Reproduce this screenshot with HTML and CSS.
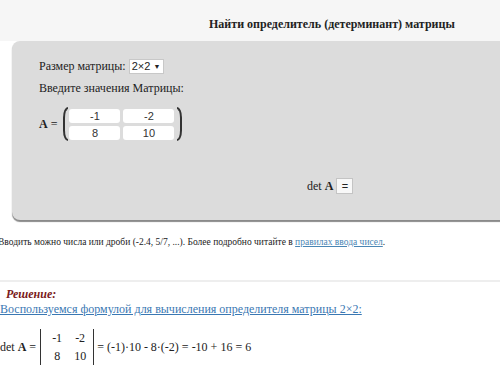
FILE: index.html
```html
<!DOCTYPE html>
<html lang="ru">
<head>
    <meta charset="UTF-8">
    <title>Определитель матрицы</title>
    <link rel="stylesheet" href="styles.css">
</head>
<body>

<div class="top">
    <h1 class="title">Найти определитель (детерминант) матрицы</h1>
</div>

<div class="panel">
    <div class="row">
        Размер матрицы:
        <span class="select">2×2 <span class="caret">▼</span></span>
    </div>
    <div class="row">Введите значения Матрицы:</div>
    <div class="matrix-row">
        <span><b>A</b> =</span>
        <span class="paren left"></span>
        <div class="cells">
            <span class="cell">-1</span>
            <span class="cell">-2</span>
            <span class="cell">8</span>
            <span class="cell">10</span>
        </div>
        <span class="paren right"></span>
    </div>
    <div class="det-row">
        <span>det <b>A</b></span>
        <span class="eq-button">=</span>
    </div>
</div>

<p class="note">Вводить можно числа или дроби (-2.4, 5/7, ...). Более подробно читайте в <a href="#">правилах ввода чисел</a>.</p>

<div class="solution">
    <div class="sol-title">Решение:</div>
    <a class="formula-link" href="#">Воспользуемся формулой для вычисления определителя матрицы 2×2:</a>
    <div class="det-line">
        <span>det <b>A</b> =</span>
        <div class="det-matrix">
            <span>-1</span><span>-2</span>
            <span>8</span><span>10</span>
        </div>
        <span>= (-1)·10 - 8·(-2) = -10 + 16 = 6</span>
    </div>
</div>

</body>
</html>
```

FILE: styles.css
```css
body {
    margin: 0;
    background-color: #fff;
    font-family: "Liberation Serif", "Times New Roman", serif;
    font-size: 12px;
    color: #222;
    overflow: hidden;
}

.top {
    background-color: #f6f6f6;
    height: 41px;
}

.title {
    margin: 0;
    padding: 17px 0 0 209px;
    font-size: 12px;
    font-weight: bold;
    color: #222;
}

.panel {
    background-color: #dcdcdc;
    margin: 0 -20px 0 12px;
    height: 179px;
    border-radius: 8px 0 0 8px;
    padding: 18px 0 0 27px;
    box-sizing: border-box;
    box-shadow: 0 2px 1px #8a8a8a;
}

.row {
    height: 22px;
    line-height: 15px;
}

.select {
    display: inline-block;
    background: #fff;
    border: 1px solid #c8c8c8;
    font-family: "Liberation Sans", Arial, sans-serif;
    font-size: 11px;
    line-height: 13px;
    padding: 0 3px 0 2px;
}

.caret {
    font-size: 7px;
    vertical-align: 1px;
}

.matrix-row {
    display: flex;
    align-items: center;
    margin-top: 4px;
}

.paren {
    width: 5px;
    height: 34px;
    border: 2px solid #333;
    box-sizing: border-box;
}

.paren.left {
    margin-left: 6px;
    border-right: none;
    border-radius: 8px 0 0 8px / 17px 0 0 17px;
    margin-right: 1px;
}

.paren.right {
    border-left: none;
    border-radius: 0 8px 8px 0 / 0 17px 17px 0;
    margin-left: 3px;
}

.cells {
    display: grid;
    grid-template-columns: 51px 51px;
    gap: 3px 3px;
}

.cell {
    background: #fff;
    border-radius: 3px;
    height: 14px;
    line-height: 14px;
    text-align: center;
    font-family: "Liberation Sans", Arial, sans-serif;
    font-size: 11px;
    color: #333;
}

.det-row {
    margin: 37px 0 0 268px;
    display: flex;
    align-items: center;
    gap: 3px;
}

.eq-button {
    display: inline-block;
    background: #f8f8f8;
    border: 1px solid #c4c4c4;
    width: 15px;
    height: 14px;
    line-height: 14px;
    text-align: center;
    font-family: "Liberation Sans", Arial, sans-serif;
    font-size: 11px;
}

.note {
    margin: 17px 0 0 -2px;
    font-size: 9.5px;
    color: #222;
    white-space: nowrap;
}

.note a {
    color: #4a86b4;
}

.solution {
    margin-top: 33px;
    border-top: 2px solid #eeeeee;
    padding-top: 4px;
}

.sol-title {
    color: #7a1a1a;
    font-weight: bold;
    font-style: italic;
    margin-left: 6px;
    line-height: 16px;
}

.formula-link {
    color: #3a78b3;
    white-space: nowrap;
}

.det-line {
    display: flex;
    align-items: center;
    margin-top: 12px;
    white-space: nowrap;
}

.det-matrix {
    display: grid;
    grid-template-columns: 22px 22px;
    column-gap: 1px;
    border-left: 1px solid #333;
    border-right: 1px solid #333;
    padding: 0 2px 0 5px;
    margin: 0 3px 0 4px;
    height: 36px;
    align-content: center;
    line-height: 18px;
    text-align: center;
}
```
